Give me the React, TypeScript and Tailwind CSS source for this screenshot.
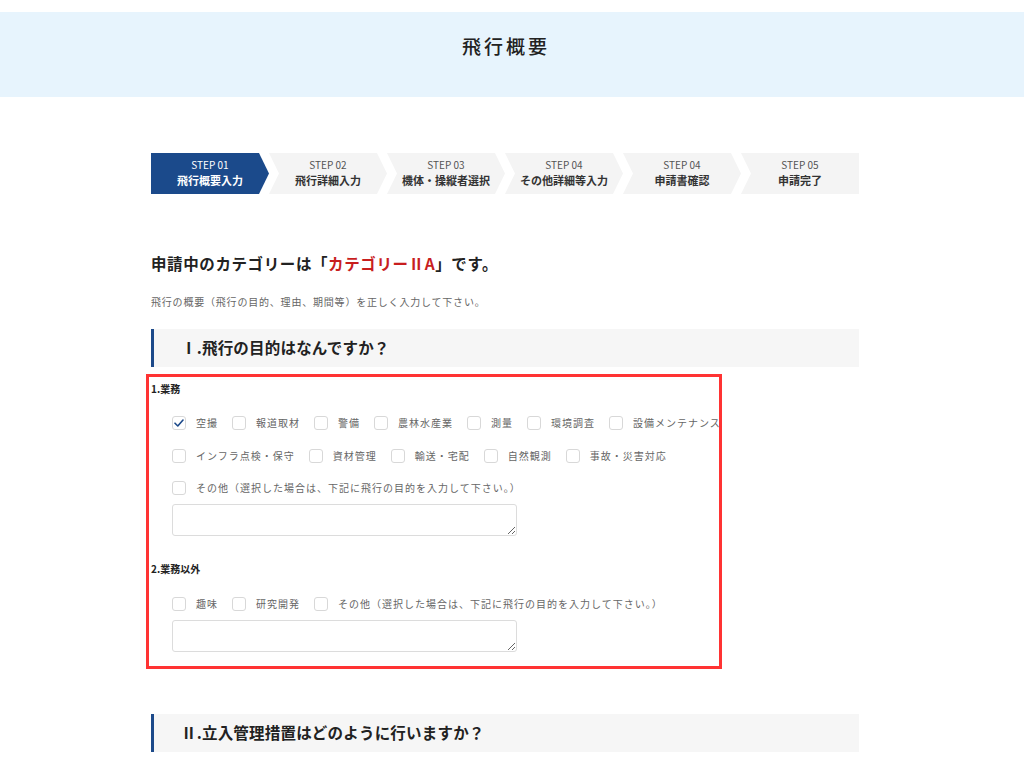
import type { ReactNode } from "react";

const font = { fontFamily: '"Noto Sans CJK JP", "Noto Sans", sans-serif' };

const steps = [
  { no: "STEP 01", name: "飛行概要入力" },
  { no: "STEP 02", name: "飛行詳細入力" },
  { no: "STEP 03", name: "機体・操縦者選択" },
  { no: "STEP 04", name: "その他詳細等入力" },
  { no: "STEP 04", name: "申請書確認" },
  { no: "STEP 05", name: "申請完了" },
];

function stepClip(i: number) {
  if (i === 0) return "polygon(0 0, calc(100% - 10px) 0, 100% 50%, calc(100% - 10px) 100%, 0 100%)";
  if (i === steps.length - 1) return "polygon(0 0, 100% 0, 100% 100%, 0 100%, 10px 50%)";
  return "polygon(0 0, calc(100% - 10px) 0, 100% 50%, calc(100% - 10px) 100%, 0 100%, 10px 50%)";
}

function Check({ label, checked }: { label: string; checked?: boolean }) {
  return (
    <label className="flex items-center gap-[10px] mr-[14px] whitespace-nowrap">
      <span className="w-[14px] h-[14px] rounded-[3px] border border-[#d8d8d8] bg-white flex items-center justify-center shrink-0">
        {checked && (
          <svg width="10" height="8" viewBox="0 0 10 8" fill="none">
            <path d="M1 4.2 L3.8 7 L9 1" stroke="#1d4a8a" strokeWidth="1.6" strokeLinecap="round" strokeLinejoin="round" />
          </svg>
        )}
      </span>
      <span className="text-[10px] tracking-[1px] text-[#666] leading-[20px]">{label}</span>
    </label>
  );
}

function Row({ children }: { children: ReactNode }) {
  return <div className="flex items-center h-[20px] pl-[21px]">{children}</div>;
}

function SectionHead({ children }: { children: ReactNode }) {
  return (
    <div className="h-[38px] bg-[#f6f6f6] border-l-[3px] border-[#1d4a8a] flex items-center pl-[27px]">
      <h2 className="text-[15.5px] font-bold text-[#222] tracking-[0.2px]">{children}</h2>
    </div>
  );
}

export default function App() {
  return (
    <div className="min-h-[768px] bg-white pt-[12px]" style={font}>
      <div className="h-[85px] bg-[#e7f4fd] flex justify-center pr-[15px] pt-[20px]">
        <h1 className="text-[19px] leading-[28px] font-medium tracking-[3px] text-[#222] pl-[3px]">飛行概要</h1>
      </div>

      <div className="w-[708px] ml-[151px]">
        <div className="flex mt-[56px] h-[41px]">
          {steps.map((s, i) => (
            <div
              key={i}
              className={
                "w-[118px] flex flex-col items-center justify-center " +
                (i === 0 ? "bg-[#1b4a8b] text-white" : "bg-[#f4f4f4] text-[#333]")
              }
              style={{ clipPath: stepClip(i) }}
            >
              <span className={"text-[10px] leading-[14px] " + (i === 0 ? "text-white" : "text-[#555]")}>{s.no}</span>
              <span className="text-[11px] font-bold leading-[17px]">{s.name}</span>
            </div>
          ))}
        </div>

        <p className="mt-[57px] text-[15.5px] font-bold leading-[24px] text-[#222] tracking-[0.6px]">
          申請中のカテゴリーは「<span className="text-[#c81e1e]">カテゴリーⅡA</span>」です。
        </p>

        <p className="mt-[19px] text-[10px] leading-[16px] tracking-[0.8px] text-[#666]">
          飛行の概要（飛行の目的、理由、期間等）を正しく入力して下さい。
        </p>

        <div className="mt-[19px]">
          <SectionHead>Ⅰ.飛行の目的はなんですか？</SectionHead>
        </div>

        <div className="mt-[7px] -ml-[5px] w-[576px] border-[3px] border-[#ff3333] pl-[2px] pt-[4px] pb-[14px] overflow-hidden">
          <p className="text-[10px] font-bold leading-[16px] text-[#222]">1.業務</p>
          <div className="mt-[16px]">
            <Row>
              <Check label="空撮" checked />
              <Check label="報道取材" />
              <Check label="警備" />
              <Check label="農林水産業" />
              <Check label="測量" />
              <Check label="環境調査" />
              <Check label="設備メンテナンス" />
            </Row>
          </div>
          <div className="mt-[13px]">
            <Row>
              <Check label="インフラ点検・保守" />
              <Check label="資材管理" />
              <Check label="輸送・宅配" />
              <Check label="自然観測" />
              <Check label="事故・災害対応" />
            </Row>
          </div>
          <div className="mt-[12px]">
            <Row>
              <Check label="その他（選択した場合は、下記に飛行の目的を入力して下さい。）" />
            </Row>
          </div>
          <div className="pl-[21px] mt-[6px]">
            <textarea className="block w-[345px] h-[32px] border border-[#dcdcdc] rounded-[3px] bg-white" />
          </div>

          <p className="mt-[25px] text-[10px] font-bold leading-[16px] text-[#222]">2.業務以外</p>
          <div className="mt-[17px]">
            <Row>
              <Check label="趣味" />
              <Check label="研究開発" />
              <Check label="その他（選択した場合は、下記に飛行の目的を入力して下さい。）" />
            </Row>
          </div>
          <div className="pl-[21px] mt-[6px]">
            <textarea className="block w-[345px] h-[32px] border border-[#dcdcdc] rounded-[3px] bg-white" />
          </div>
        </div>

        <div className="mt-[45px]">
          <SectionHead>Ⅱ.立入管理措置はどのように行いますか？</SectionHead>
        </div>
        <div className="h-[40px]" />
      </div>
    </div>
  );
}
